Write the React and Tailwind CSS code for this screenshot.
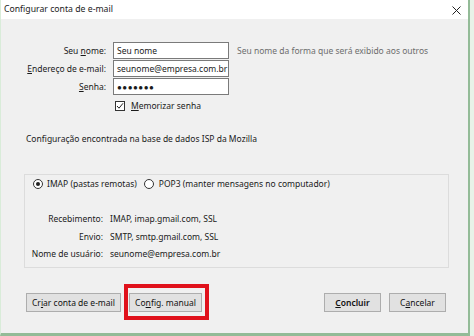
import React from "react";

const font = { fontFamily: '"Noto Sans", "Open Sans", sans-serif' };

const Field = ({ accessKey, rest, pre = "", value, password }) => (
    <>
        <label className="text-right pr-[7px] leading-[17px] whitespace-nowrap">
            {pre}
            <u>{accessKey}</u>
            {rest}
        </label>
        <div className="w-[116px] h-[17px] border border-[#7a7a7a] bg-white px-[3px] leading-[15px] overflow-hidden whitespace-nowrap">
            {password ? <span className="tracking-[0.5px] text-[8px]">●●●●●●●</span> : value}
        </div>
    </>
);

const Button = ({ children, className = "" }) => (
    <button
        className={`h-[19px] border border-[#adadad] bg-[#e1e1e1] text-[8.5px] leading-[17px] text-[#111] whitespace-nowrap ${className}`}
    >
        {children}
    </button>
);

const App = () => {
    return (
        <div className="w-[474px] h-[336px] bg-[#e8f2e8] overflow-hidden text-[8.5px] text-[#1a1a1a]" style={font}>
            <div className="w-[470px] h-[336px] bg-[#f0f0f0] border-r-2 border-b-[3px] border-[#93bb97] border-l border-l-[#d9ecd9] flex flex-col">
                <div className="h-[19px] bg-white flex items-center justify-between pl-[3px] pr-[7px] shrink-0">
                    <span className="text-[8.7px] text-[#222]">Configurar conta de e-mail</span>
                    <svg width="9" height="9" viewBox="0 0 9 9" className="mt-[1px]">
                        <path d="M0.5 0.5 L8.5 8.5 M8.5 0.5 L0.5 8.5" stroke="#222" strokeWidth="1" />
                    </svg>
                </div>

                <div className="flex items-start mt-[23px]">
                    <div className="grid grid-cols-[112px_116px] gap-y-[1px] items-center">
                        <Field accessKey="n" pre="Seu " rest="ome:" value="Seu nome" />
                        <Field accessKey="E" rest="ndereço de e-mail:" value="seunome@empresa.com.br" />
                        <Field accessKey="S" rest="enha:" password />
                        <div />
                        <div className="flex items-center gap-[6px] mt-[4px] pl-[2px] h-[12px]">
                            <span className="w-[10px] h-[10px] border border-[#333] bg-white flex items-center justify-center">
                                <svg width="8" height="8" viewBox="0 0 8 8">
                                    <path d="M1 4 L3 6.2 L7 1.3" stroke="#222" strokeWidth="1" fill="none" />
                                </svg>
                            </span>
                            <span>
                                <u>M</u>emorizar senha
                            </span>
                        </div>
                    </div>
                    <span className="ml-[8px] text-[#6d6d6d] leading-[17px] whitespace-nowrap">
                        Seu nome da forma que será exibido aos outros
                    </span>
                </div>

                <p className="ml-[25px] mt-[20px] leading-[14px]">Configuração encontrada na base de dados ISP da Mozilla</p>

                <div className="ml-[23px] mt-[28px] w-[425px] h-[94px] border border-[#dcdcdc] pt-[2px]">
                    <div className="flex items-center h-[14px]">
                        <span className="ml-[8px] w-[10px] h-[10px] rounded-full border border-[#333] bg-white flex items-center justify-center">
                            <span className="w-[4px] h-[4px] rounded-full bg-[#222]" />
                        </span>
                        <span className="ml-[4px]">IMAP (pastas remotas)</span>
                        <span className="ml-[7px] w-[10px] h-[10px] rounded-full border border-[#333] bg-white" />
                        <span className="ml-[5px]">POP3 (manter mensagens no computador)</span>
                    </div>
                    <div className="grid grid-cols-[85px_1fr] mt-[19px] leading-[17.5px]">
                        <span className="text-right pr-[7px]">Recebimento:</span>
                        <span>IMAP, imap.gmail.com, SSL</span>
                        <span className="text-right pr-[7px]">Envio:</span>
                        <span>SMTP, smtp.gmail.com, SSL</span>
                        <span className="text-right pr-[7px] whitespace-nowrap">Nome de usuário:</span>
                        <span>seunome@empresa.com.br</span>
                    </div>
                </div>

                <div className="flex items-center mt-[25px] ml-[25px] mr-[22px]">
                    <Button className="w-[95px]">
                        Cr<u>i</u>ar conta de e-mail
                    </Button>
                    <div className="relative ml-[8px]">
                        <Button className="w-[73px]">
                            Co<u>n</u>fig. manual
                        </Button>
                        <span className="absolute -left-[5px] -right-[7px] -top-[9px] -bottom-[8px] border-[4px] border-[#e0111b]" />
                    </div>
                    <div className="flex-1" />
                    <Button className="w-[57px] font-semibold">
                        <u>C</u>oncluir
                    </Button>
                    <Button className="w-[57px] ml-[8px]">
                        C<u>a</u>ncelar
                    </Button>
                </div>
            </div>
        </div>
    );
};

export default App;
